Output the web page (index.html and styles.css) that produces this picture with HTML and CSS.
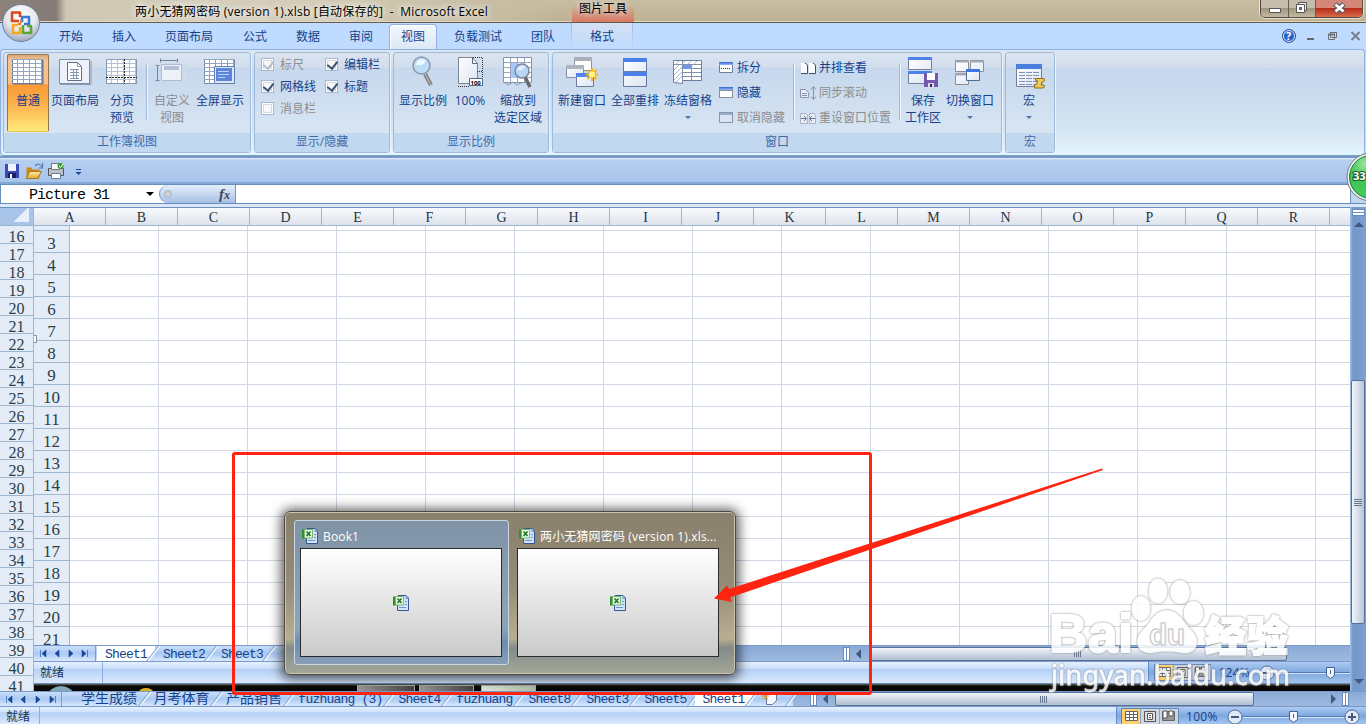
FILE: index.html
```html
<!DOCTYPE html>
<html lang="zh-CN">

<head>
    <meta charset="UTF-8">
    <title>Microsoft Excel</title>
    <link rel="stylesheet" href="styles.css">
</head>

<body>
    <svg class="defs">
        <defs>
            <linearGradient id="gBlue" x1="0" y1="0" x2="0" y2="1"><stop offset="0" stop-color="#2f62cf"/><stop offset="1" stop-color="#9dbdf8"/></linearGradient>
            <linearGradient id="gPage" x1="0" y1="0" x2="1" y2="1"><stop offset="0" stop-color="#fff"/><stop offset="1" stop-color="#dce4f2"/></linearGradient>
            <radialGradient id="gOrb" cx=".5" cy=".3" r=".7"><stop offset="0" stop-color="#fff"/><stop offset=".6" stop-color="#e3e6ec"/><stop offset="1" stop-color="#9aa6ba"/></radialGradient>
            <radialGradient id="gGreen" cx=".35" cy=".2" r=".9"><stop offset="0" stop-color="#9be69b"/><stop offset=".4" stop-color="#3fc254"/><stop offset="1" stop-color="#44cf5f"/></radialGradient>
            <linearGradient id="gFold" x1="0" y1="0" x2="0" y2="1"><stop offset="0" stop-color="#fff0a0"/><stop offset="1" stop-color="#e0a52c"/></linearGradient>
            <pattern id="cells" width="6" height="4" patternUnits="userSpaceOnUse"><path d="M5.5 0v4M0 3.5h6" stroke="#94a5c0" fill="none"/></pattern>
        </defs>
        <symbol id="xls" viewBox="0 0 16 16">
            <path d="M5 .5h8l2.500 2.500v12.500H4.500V8z" fill="#d3e3fa" stroke="#34578f"/>
            <path d="M13 .5v3h2.500M6 12.500h7M12 9.500h2M12 6.500h2" stroke="#6b93cf" fill="none"/>
            <path d="M0 1.500h4v9H0z" fill="#2c9231"/>
            <path d="M2.500 1.500h8v8.500h-8z" fill="#e9f7df" stroke="#74b96e"/>
            <path d="M4.500 3.500l4 4.500M8.500 3.500l-4 4.500" stroke="#24732b" stroke-width="1.600"/>
        </symbol>
        <symbol id="wpane" viewBox="0 0 16 16">
            <path d="M1.500 2.500h13v10h-13z" fill="#fff" stroke="#6b7f9f"/>
            <path d="M1 2h14v3H1z" fill="url(#gBlue)"/>
        </symbol>
        <symbol id="views" viewBox="0 0 58 17">
            <path d="M.5.5h57v16H.5z" fill="#cdd6e2" stroke="#6485b3"/>
            <path d="M1 1h18v15H1z" fill="#ffd06c"/>
            <path d="M4.500 3.500h12v9h-12zM4.500 6.500h12M4.500 9.500h12M8.500 3.500v9M12.500 3.500v9" fill="#fff" stroke="#666"/>
            <path d="M23.500 3.500h11v10h-11z" fill="#ddd" stroke="#555"/><path d="M26.500 5.500h5v6h-5zM28 7.500h2M28 9.500h2" fill="#fff" stroke="#555"/>
            <path d="M41.500 3.500h12v9h-12z" fill="#999" stroke="#666"/><path d="M42 3h4v7h-4zM48 3h4v5h-4z" fill="#fff" stroke="#555"/>
            <path d="M19.500 1v15M38.500 1v15" stroke="#8ea4c4"/>
        </symbol>
    </svg>

    <header class="titlebar">
        <div class="title">两小无猜网密码 (version 1).xlsb [自动保存的] &nbsp;-&nbsp; Microsoft Excel</div>
        <div class="context-title">图片工具</div>
        <div class="winbtns">
            <span><svg width="27" height="17"><path d="M8.500 8.500h11v4h-11z" fill="#fff" stroke="#555"/></svg></span>
            <span><svg width="26" height="17"><path d="M9.500 2.500h8v8h-8z" fill="#eee" stroke="#555"/><path d="M7.500 4.500h8v8h-8z" fill="#fff" stroke="#555"/><path d="M10.500 7.500h2v2h-2z" fill="#888" stroke="#555"/></svg></span>
            <span class="close"><svg width="46" height="17"><path d="M19 4l9 8M28 4l-9 8" stroke="#555566" stroke-width="5"/><path d="M19.500 4.500l8 7M27.500 4.500l-8 7" stroke="#fff" stroke-width="2.800"/></svg></span>
        </div>
    </header>

    <nav class="tabs">
        <span class="tab">开始</span>
        <span class="tab">插入</span>
        <span class="tab wide">页面布局</span>
        <span class="tab">公式</span>
        <span class="tab">数据</span>
        <span class="tab">审阅</span>
        <span class="tab active">视图</span>
        <span class="tab load">负载测试</span>
        <span class="tab team">团队</span>
        <span class="tab format">格式</span>
        <svg class="tab-tools" width="84" height="16">
            <circle cx="11" cy="8" r="6.500" fill="#2460cf" stroke="#33507f"/><circle cx="11" cy="8" r="5.500" fill="none" stroke="#dfeaff"/>
            <text x="8" y="12" font-size="11" font-weight="bold" fill="#fff">?</text>
            <path d="M29 11h7" stroke="#666" stroke-width="2"/>
            <path d="M52.500 4.500h6v5h-6zM50.500 6.500h6v5h-6zM52 4.500h7" fill="none" stroke="#6b7078"/><path d="M50 6.500h7" stroke="#6b7078" stroke-width="2"/>
            <path d="M73.500 4l8 8M81.500 4l-8 8" stroke="#777f8c" stroke-width="2"/>
        </svg>
    </nav>

    <section class="ribbon">
        <div class="group g-views">
            <div class="tools">
                <div class="btn pressed">
                    <svg class="ico" viewBox="0 0 32 32"><path d="M1 4h31v25H1z" fill="#6a5b48" opacity=".4"/><path d="M.5 3.500h30v24H.5z" fill="#fff" stroke="#667a99"/><path d="M0 3h30v24H0z" fill="url(#cells)"/></svg>
                    <p>普通</p>
                </div>
                <div class="btn w52">
                    <svg class="ico" viewBox="0 0 32 32"><path d="M1 28.500h31V5" fill="none" stroke="#8c99ae"/><path d="M.5 3.500h30v24H.5z" fill="#eef2f8" stroke="#7b8eac"/><path d="M8.500 6.500h10l4 4v14h-14z" fill="#fff" stroke="#5c6f8f"/><path d="M18.500 6.500v4h4M11 13.500h9M11 16.500h9M11 19.500h9M11 22.500h9M14.500 13v10M17.500 13v10" fill="none" stroke="#8797b2"/></svg>
                    <p>页面布局</p>
                </div>
                <div class="btn w42">
                    <svg class="ico" viewBox="0 0 32 32"><path d="M.5 3.500h30v24H.5z" fill="#fff" stroke="#8294af"/><path d="M0 3h30v24H0z" fill="url(#cells)" opacity=".7"/><path d="M18.500 3v25M0 21.500h31" stroke="#222" stroke-dasharray="2 1"/></svg>
                    <p>分页<br>预览</p>
                </div>
                <i class="sep"></i>
                <div class="btn w44 off">
                    <svg class="ico" viewBox="0 0 32 32"><path d="M9 7h21v20H9z" fill="#d0dbea"/><path d="M5.500 8.500h20v16h-20z" fill="#edf2f9" stroke="#aebcd2"/><path d="M8 10h15v4H8z" fill="#b1bfd8"/><path d="M4.500 4.500h17M4.500 2.500v4M21.500 2.500v4M1.500 9v16M-.5 9.500h4M-.5 24.500h4" stroke="#7886a2" fill="none"/></svg>
                    <p>自定义<br>视图</p>
                </div>
                <div class="btn w52">
                    <svg class="ico" viewBox="0 0 32 32"><path d="M.5 3.500h30v24H.5z" fill="#fff" stroke="#7286a6"/><path d="M0 3h30v24H0z" fill="url(#cells)"/><path d="M10.500 10.500h20v17h-20z" fill="#dce7fa" stroke="#6480b0"/><path d="M12 12h16v13H12z" fill="#5b85dc"/><path d="M14 15.500h11M14 18.500h11M14 21.500h7" stroke="#bed5ff"/></svg>
                    <p>全屏显示</p>
                </div>
            </div>
            <h3>工作簿视图</h3>
        </div>

        <div class="group g-show">
            <div class="tools checks">
                <label class="off"><i class="box on"></i>标尺</label>
                <label><i class="box on"></i>编辑栏</label>
                <label><i class="box on"></i>网格线</label>
                <label><i class="box on"></i>标题</label>
                <label class="off"><i class="box"></i>消息栏</label>
            </div>
            <h3>显示/隐藏</h3>
        </div>

        <div class="group g-zoom">
            <div class="tools">
                <div class="btn w54">
                    <svg class="ico" viewBox="0 0 32 32"><path d="M18 18l6 11" stroke="#777" stroke-width="4"/><path d="M18 18l6 11" stroke="#bbb" stroke-width="1.500"/><circle cx="14.500" cy="9.500" r="8.500" fill="#bcdcf8" stroke="#8c99ad" stroke-width="1.600"/><path d="M9 9a6 6 0 0 1 9-5q1 6-9 5" fill="#edf8ff"/></svg>
                    <p>显示比例</p>
                </div>
                <div class="btn w40">
                    <svg class="ico" viewBox="0 0 32 32"><path d="M4.500 1.500h14l5 6v20h-19z" fill="url(#gPage)" stroke="#7d8797"/><path d="M18.500 1.500v6h5" fill="none" stroke="#596579"/><path d="M19 1.500h9.500V21M4 30.500h11M23 15.500h6" fill="none" stroke="#333" stroke-dasharray="1 1"/><path d="M15.500 22.500h13v7h-13z" fill="#fff" stroke="#59677c"/><text x="16.500" y="28.500" font-size="6" font-weight="bold">100</text></svg>
                    <p>100%</p>
                </div>
                <div class="btn w56">
                    <svg class="ico" viewBox="0 0 32 32"><path d="M1.500 1.500h28v25h-28z" fill="#fff" stroke="#8795ac"/><path d="M2 6.500h27M2 11.500h27M2 16.500h27M2 21.500h27M8.500 2v24M15.500 2v24M22.500 2v24" stroke="#9aa7be"/><path d="M9 7h6v15H9z" fill="#a9c6fb"/><path d="M2 26l4 3 5-3 4 3 6-3" fill="none" stroke="#8795ac"/><path d="M23 21l5 10" stroke="#686868" stroke-width="3.500"/><circle cx="20" cy="15" r="7" fill="#bad5f5" stroke="#7c8799" stroke-width="1.500"/><path d="M15 14q2-5 8-4-1 5-8 4" fill="#e3f2ff"/></svg>
                    <p>缩放到<br>选定区域</p>
                </div>
            </div>
            <h3>显示比例</h3>
        </div>

        <div class="group g-window">
            <div class="tools">
                <div class="btn w54">
                    <svg class="ico" viewBox="0 0 32 32"><path d="M8.500 1.500h17v13h-17z" fill="#fff" stroke="#8a8f99"/><path d="M8 1h18v4H8z" fill="#a9afbb"/><path d="M.5 9.500h17v12H.5z" fill="url(#gPage)" stroke="#8a8f99"/><path d="M0 9h18v4H0z" fill="#b0b5c0"/><path d="M10.500 17.500h17v13h-17z" fill="url(#gPage)" stroke="#6a7da0"/><path d="M10 17h18v4H10z" fill="#5285ee"/><path d="M26 12v13M20 18.500h12M21.500 14l9 9M30.500 14l-9 9" stroke="#f5b410" stroke-width="2"/><circle cx="26" cy="18.500" r="3" fill="#fff58d"/></svg>
                    <p>新建窗口</p>
                </div>
                <div class="btn w52">
                    <svg class="ico" viewBox="0 0 32 32"><path d="M4.500 2.500h23v28h-23z" fill="url(#gPage)" stroke="#67799a"/><path d="M4 2h24v4H4zM4 16h24v4H4z" fill="#4b80e9"/><path d="M4 15.500h24" stroke="#667fa9"/></svg>
                    <p>全部重排</p>
                </div>
                <div class="btn w54">
                    <svg class="ico" viewBox="0 0 32 32"><path d="M1.500 4.500h28v20h-19v3l-9-1z" fill="#fff" stroke="#6b7e9e"/><path d="M2 8.500h27M10 12.500h19M10 16.500h19M10 20.500h19M10.500 5v21M19.500 9v16" stroke="#8291ab"/><path d="M11 9h9v4h-9z" fill="#6f97ee"/><path d="M3 9l4-4M9 9l4-4M15 9l4-4M21 9l4-4M2 14l5-5M2 19l8-8M2 24l8-8M4 26l6-6" stroke="#93a5c4" stroke-width=".8"/></svg>
                    <p>冻结窗格</p><b class="arr"></b>
                </div>
                <div class="smalls s1">
                    <div><svg width="16" height="16"><use href="#wpane"/><path d="M3 8.500h10" stroke="#333" stroke-dasharray="1 1"/></svg>拆分</div>
                    <div><svg width="16" height="16"><path d="M1.500 5.500h13v7h-13z" fill="#fff" stroke="#333" stroke-dasharray="1 1"/><path d="M1 2h14v3H1z" fill="url(#gBlue)"/></svg>隐藏</div>
                    <div class="off"><svg width="16" height="16"><path d="M1.500 2.500h13v10h-13z" fill="#dae4f2" stroke="#8794aa"/><path d="M2 4h12" stroke="#9cadc9" stroke-width="2"/></svg>取消隐藏</div>
                </div>
                <i class="sep"></i>
                <div class="smalls s2">
                    <div><svg width="16" height="16"><path d="M1 3h4l2 2v8H1zM9 3h4l2 2v8H9z" fill="#fff"/><path d="M1 13.500h6.500V5L5 3M9 13.500h6.500V5L13 3" fill="none" stroke="#3d506e"/></svg>并排查看</div>
                    <div class="off"><svg width="16" height="16"><path d="M.5 4.500h5l3 3v5h-8zM2 8.500h5M2 10.500h5" fill="#e8edf5" stroke="#8794ab"/><path d="M13.500 2v12M11 4.500l2.500-3 2.500 3M11 11.500l2.500 3 2.500-3" fill="none" stroke="#8292ad"/></svg>同步滚动</div>
                    <div class="off"><svg width="16" height="16"><path d="M.5 3.500h6l1 2v8h-7zM9.500 3.500h5l1 2v8h-6z" fill="#e8edf5" stroke="#a9b5c8"/><path d="M1 8.500h5M4 6l2.500 2.500L4 11M15 8.500h-5M12 6L9.500 8.500 12 11" fill="none" stroke="#64789c"/></svg>重设窗口位置</div>
                </div>
                <i class="sep"></i>
                <div class="btn w40">
                    <svg class="ico" viewBox="0 0 32 32"><path d="M1.500 1.500h23v12h-23zM1.500 15.500h23v12h-23z" fill="url(#gPage)" stroke="#70809d"/><path d="M1 1h24v3H1zM1 15h24v3H1z" fill="#4f82e6"/><path d="M17 17h14v14H17z" fill="#7657ae"/><path d="M20 17h8v7h-8z" fill="#fff"/><path d="M21 27h6v4h-6z" fill="#ddd5ed"/><path d="M23 28h2v3h-2z" fill="#352750"/></svg>
                    <p>保存<br>工作区</p>
                </div>
                <div class="btn w54">
                    <svg class="ico" viewBox="0 0 32 32"><path d="M1.500 4.500h13v11h-13zM16.500 4.500h13v11h-13zM1.500 17.500h13v11h-13z" fill="url(#gPage)" stroke="#898d94"/><path d="M1 5.500h14M16 5.500h14M1 18.500h14" stroke="#a5a9b2" stroke-width="2"/><path d="M12.500 13.500h13v11h-13z" fill="url(#gPage)" stroke="#536a92"/><path d="M12 14.500h14" stroke="#3d76e2" stroke-width="3"/></svg>
                    <p>切换窗口</p><b class="arr"></b>
                </div>
            </div>
            <h3>窗口</h3>
        </div>

        <div class="group g-macro">
            <div class="tools">
                <div class="btn w42">
                    <svg class="ico" viewBox="0 0 32 32"><path d="M3.500 8.500h25v22h-25z" fill="url(#gPage)" stroke="#7180a1"/><path d="M3 8h26v5H3z" fill="#4c7ee0"/><path d="M6 16.500h20M6 19.500h20M6 22.500h20M6 25.500h20M6 28.500h20" stroke="#7c93bc" stroke-dasharray="6 1"/><path d="M22.500 22.500h8.500q1.500 3.500-2 3.500l-1 3h3q1 3-1 3h-8.500q-1-3.500 2-3.500l1-3.500q-3 0-2-2.500" fill="#f0ca58" stroke="#8f6d1c"/></svg>
                    <p>宏</p><b class="arr"></b>
                </div>
            </div>
            <h3>宏</h3>
        </div>
    </section>

    <div class="qat">
        <svg width="84" height="18">
            <path d="M1 2h14v14H1z" fill="#3c49b5"/><path d="M4 2h8v7H4z" fill="#eef3ff"/><path d="M4 11h8v5H4z" fill="#172065"/><path d="M6 12h2v4H6z" fill="#fff"/>
            <g transform="translate(-3)"><path d="M25.500 5.500h5l1 2h7v9h-13z" fill="#c98a19"/><path d="M28.500 9.500h12l-4 7h-11z" fill="url(#gFold)" stroke="#a77521"/><path d="M34 4q4-4 7 1M41.500 1v5h-4" fill="none" stroke="#527db0" stroke-width="1.200"/></g>
            <g transform="translate(-3)"><path d="M47.500 6.500h15v7h-15z" fill="#bfc1c6" stroke="#555"/><path d="M50.500 1.500h8v6h-8z" fill="#f5f8ff" stroke="#777"/><path d="M50.500 11.500h9v5h-9z" fill="#fff" stroke="#6a80a1"/><circle cx="59.500" cy="4" r="3" fill="#3f9a3e"/><path d="M58 4l1.500 1.500L62 2" stroke="#fff" fill="none"/></g>
            <path d="M72 7.500h5" stroke="#1c4796"/><path d="M71.500 10h6l-3 3z" fill="#1c4796"/>
        </svg>
    </div>

    <div class="formula">
        <div class="namebox"><span>Picture 31</span><b class="arr"></b></div>
        <div class="fx"><i class="knob"></i><em>f<small>x</small></em></div>
        <div class="entry"></div>
        <div class="expand"></div>
    </div>
    <div class="band"></div>

    <main class="work">
        <div class="sheet">
            <div class="cols" id="cols"><span class="corner"></span></div>
            <div class="panes">
                <div class="outer-rows" id="outerRows"></div>
                <div class="inner">
                    <div class="cells">
                        <div class="inner-rows" id="innerRows"><span class="cut"></span></div>
                        <div class="lines"></div>
                        <i class="handle"></i>
                    </div>
                    <div class="sheetbar bar-in">
                        <svg class="nav" width="62" height="15"><path d="M6.500 4v7M12 4v7L8 7.500zM25 4v7l-4-3.500zM35 4v7l4-3.500zM48 4v7l4-3.500zM53.500 4v7" fill="#174699" stroke="#174699" stroke-width=".6"/></svg>
                        <span class="st on">Sheet1</span><span class="st">Sheet2</span><span class="st">Sheet3</span><span class="st new"></span>
                        <div class="hscroll"><i class="split"></i><i class="la"></i><i class="thumb"></i></div>
                    </div>
                    <div class="status st-in">
                        <span class="ready">就绪</span>
                        <div class="zoomer">
                            <svg width="58" height="17"><use href="#views"/></svg>
                            <span>124%</span>
                            <svg class="slide" width="94" height="17"><path d="M18 8.500h76" stroke="#5479b4"/><path d="M18 9.500h76" stroke="#d5e5ff"/><circle cx="10" cy="9" r="7" fill="#dfe9f8" stroke="#536c96"/><path d="M6 9h8" stroke="#44597c" stroke-width="2"/><path d="M69.500 3.500h8v8l-4 3-4-3z" fill="#f3f7ff" stroke="#466190"/><path d="M73.500 6v4" stroke="#466190"/></svg>
                        </div>
                    </div>
                    <div class="taskbar"><i class="orb"></i><i class="gold"></i><i class="tb t1"></i><i class="tb t2"></i><i class="tb t3"></i></div>
                </div>
            </div>
        </div>
        <div class="vscroll"><i class="vsplit"></i><b class="up"></b><i class="vthumb"></i><b class="down"></b></div>
    </main>

    <div class="sheetbar bar-out">
        <svg class="nav" width="62" height="14"><path d="M6.500 4v7M12 4v7L8 7.500zM25 4v7l-4-3.500zM36 4v7l4-3.500zM50 4v7l4-3.500zM55.500 4v7" fill="#174699" stroke="#174699" stroke-width=".6"/></svg>
        <span class="st cn">学生成绩</span><span class="st cn">月考体育</span><span class="st cn">产品销售</span><span class="st">fuzhuang (3)</span><span class="st">Sheet4</span><span class="st">fuzhuang</span><span class="st">Sheet8</span><span class="st">Sheet3</span><span class="st">Sheet5</span><span class="st on">Sheet1</span><span class="st new"><svg width="18" height="14"><path d="M5.500 2.500h10v6l-4 4h-6z" fill="#f5f8ff" stroke="#68799b"/><path d="M4 0v8M0 4h8M1 1l6 6M7 1L1 7" stroke="#e79b22"/></svg></span>
        <div class="hscroll"><i class="split"></i><i class="la"></i><i class="thumb"></i><i class="ra"></i><i class="split end"></i></div>
    </div>
    <div class="status st-out">
        <span class="ready">就绪</span>
        <div class="zoomer">
            <svg width="58" height="17"><use href="#views"/></svg>
            <span>100%</span>
            <svg class="slide" width="140" height="17"><path d="M18 8.500h102" stroke="#5479b4"/><path d="M18 9.500h102" stroke="#d5e5ff"/><circle cx="10" cy="9" r="7" fill="#dfe9f8" stroke="#536c96"/><path d="M6 9h8" stroke="#44597c" stroke-width="2"/><path d="M64.500 3.500h8v8l-4 3-4-3z" fill="#f3f7ff" stroke="#466190"/><path d="M68.500 6v4" stroke="#466190"/><circle cx="127" cy="9" r="7" fill="#dfe9f8" stroke="#536c96"/><path d="M123 9h8M127 5v8" stroke="#44597c" stroke-width="2"/></svg>
        </div>
    </div>

    <!-- office button -->
    <svg class="office" width="42" height="42">
        <circle cx="21" cy="21" r="18.500" fill="url(#gOrb)" stroke="#75829a"/>
        <g fill="none" stroke-width="2.600" stroke-linejoin="round">
            <path d="M20 15v-4.500h-8V19h7" stroke="#d9471c"/><path d="M22 20v-5h7v7h-5" stroke="#3f78cf"/>
            <path d="M18 23h-5v8h7v-6" stroke="#f3a81f"/><path d="M23 23v8h8v-7h-4" stroke="#5ba53a"/>
        </g>
        <path d="M20 18h2v3h-2zM18 21h3v2h-3z" fill="#e9742c"/>
    </svg>

    <!-- alt-tab style window picker -->
    <div class="picker">
        <div class="win sel">
            <div class="cap"><svg width="16" height="16"><use href="#xls"/></svg>Book1</div>
            <div class="shot"><svg width="16" height="16"><use href="#xls"/></svg></div>
        </div>
        <div class="win">
            <div class="cap"><svg width="16" height="16"><use href="#xls"/></svg>两小无猜网密码 (version 1).xls...</div>
            <div class="shot"><svg width="16" height="16"><use href="#xls"/></svg></div>
        </div>
    </div>

    <svg class="mark" width="260" height="130" viewBox="1040 570 260 130">
        <g class="logo">
            <text x="1049" y="652" font-size="53" font-weight="bold" textLength="84">Bai</text>
            <ellipse cx="1141" cy="608.500" rx="8.500" ry="11.500"/><ellipse cx="1158" cy="591" rx="8.500" ry="11.500"/><ellipse cx="1180" cy="592" rx="9" ry="11"/><ellipse cx="1193.500" cy="613" rx="9" ry="11"/>
            <path d="M1167 611c8 0 13 6 17 12 5 7 12 11 12 19 0 8-6 11-14 10-10-2-20-2-30 0-8 1-14-3-14-11 0-8 8-11 12-18 4-7 9-12 17-12z"/>
            <text class="han" x="1205" y="651" font-size="41" font-weight="900" textLength="83">经验</text>
        </g>
        <text class="du" x="1149" y="645" font-size="30" font-weight="bold" textLength="36">du</text>
        <text class="url" x="1051" y="685" font-size="27" textLength="239">jingyan.baidu.com</text>
    </svg>

    <svg class="badge" width="24" height="54">
        <circle cx="26" cy="27" r="24" fill="#f3f3f3" stroke="#777"/><circle cx="26" cy="27" r="21.500" fill="url(#gGreen)" stroke="#197a35"/>
        <text x="8" y="30" font-size="11" font-weight="bold">33</text>
    </svg>

    <div class="redbox"></div>
    <svg class="redarrow" width="400" height="140" viewBox="710 465 400 140">
        <path d="M714 598.500L727 585.500 729 589 1102 468.500 1103 470 730 597.500 732 602z" fill="#ff2412"/>
    </svg>

    <script>
        function add(id, text) {
            const span = document.createElement('span');
            span.textContent = text;
            document.getElementById(id).appendChild(span);
        }
        'ABCDEFGHIJKLMNOPQR'.split('').forEach(c => add('cols', c));
        for (let i = 16; i <= 41; i++) add('outerRows', i);
        for (let i = 3; i <= 21; i++) add('innerRows', i);
    </script>
</body>

</html>
```
FILE: styles.css
```css
* {
    box-sizing: border-box;
}

body {
    margin: 0;
    width: 1366px;
    height: 724px;
    overflow: hidden;
    position: relative;
    font: 12px "Open Sans", "Noto Sans CJK SC", sans-serif;
    color: #15428b;
    background: #bfdbff;
    display: flex;
    flex-direction: column;
}

body > * {
    flex-shrink: 0;
}

svg {
    display: block;
}

.defs {
    position: absolute;
    width: 0;
    height: 0;
}

p,
h3 {
    margin: 0;
    font-weight: normal;
}

.titlebar {
    height: 23px;
    display: flex;
    align-items: flex-start;
    color: #000;
    background: linear-gradient(90deg, #8c827b 0, #857b76 56px, #d0c8b5 66px, #d6cebb 260px, #c9bea4 480px, rgba(196, 183, 155, 0) 560px), linear-gradient(#c8bda3, #bfb292);
    border-bottom: 1px solid #615a49;
    box-shadow: inset 0 -1px #ded7c5;
}

.title {
    width: 437px;
    margin-left: 135px;
    line-height: 23px;
    letter-spacing: 0.200px;
    white-space: pre;
    text-shadow: 0 0 6px #fff, 0 0 8px #fff;
}

.context-title {
    width: 62px;
    height: 22px;
    line-height: 17px;
    text-align: center;
    text-shadow: 0 0 6px #fff;
    background: linear-gradient(rgba(220, 120, 100, 0) 20%, #dd7766);
}

.winbtns {
    display: flex;
    height: 18px;
    margin: 0 3px 0 auto;
    border: 1px solid #564c45;
    border-top: 0;
    border-radius: 0 0 5px 5px;
    overflow: hidden;
    box-shadow: 0 0 0 1px #e6dfd1;
}

.winbtns span {
    background: linear-gradient(#c5bdac 45%, #a0957f 50%, #c3b9a3);
    border-right: 1px solid #665d50;
}

.winbtns .close {
    border: 0;
    background: linear-gradient(#d5877a 45%, #b92d1b 50%, #d86c47);
}

.tabs {
    height: 26px;
    display: flex;
    padding-left: 39px;
    line-height: 27px;
}

.tab {
    width: 53px;
    text-align: center;
    padding-left: 11px;
}

.tab.wide {
    width: 77px;
    margin-right: 1px;
}

.tab.active {
    margin-left: 7px;
    padding: 0;
    width: 48px;
    margin-top: 1px;
    line-height: 24px;
    background: linear-gradient(#f2f7ff, #dde7f4);
    border: 1px solid #8db2e3;
    border-bottom: 0;
    border-radius: 4px 4px 0 0;
    box-shadow: inset 1px 1px #fff;
    position: relative;
    z-index: 1;
}

.tab.load {
    width: 82px;
    padding: 0;
}

.tab.team {
    width: 48px;
    padding: 0;
}

.tab.format {
    width: 62px;
    padding: 0;
    margin-left: 4px;
    background: linear-gradient(#d4e0f2, #bfdbff);
    border: solid transparent;
    border-width: 0 1px;
    border-image: linear-gradient(#a8b9d0, #bfdbff) 1;
}

.tab-tools {
    margin: 5px 4px 0 auto;
}

.ribbon {
    height: 107px;
    padding: 2px 0 0 2px;
    margin-right: 1px;
    display: flex;
    gap: 3px;
    border: 1px solid #8db2e3;
    border-bottom-color: #73a6b9;
    border-radius: 4px;
    background: linear-gradient(#dce6f3 0, #d2deed 17px, #c7d8ed 18px, #c9d9ee 34px, #d5e4f2 80px, #e3f4fd 104px);
}

.group {
    height: 101px;
    border: 1px solid #9fbbdc;
    border-radius: 3px;
    box-shadow: 1px 1px #eaf3fd;
    background: linear-gradient(#dae4f1 0, #d2deed 14px, #c7d8ed 15px, #d7e5f3 80px);
    display: flex;
    flex-direction: column;
}

.g-views { width: 248px; }
.g-show { width: 136px; }
.g-zoom { width: 156px; }
.g-window { width: 450px; }
.g-macro { width: 50px; }

.group h3 {
    height: 19px;
    line-height: 18px;
    font-size: 12px;
    text-align: center;
    color: #3e6aaa;
    background: #c1d8f0;
}

.tools {
    height: 80px;
    padding: 1px 2px 0;
    display: flex;
}

.g-views .tools {
    padding-left: 3px;
}

.btn {
    text-align: center;
    line-height: 17px;
    white-space: nowrap;
    padding-top: 2px;
}

.btn p {
    margin: 4px -4px 0;
}

.ico {
    width: 32px;
    height: 32px;
    margin: 0 auto;
    overflow: visible;
}

.pressed {
    width: 42px;
    height: 78px;
    border: 1px solid #8f7652;
    border-bottom-color: #edc64d;
    padding-top: 1px;
    border-radius: 2px;
    background: linear-gradient(#d8a87b 0, #f9c494 6px, #fcbd81 29px, #fb9a36 30px, #fdb04a 48px, #ffe97d);
}

.w40 { width: 40px; }
.w42 { width: 42px; }
.w44 { width: 44px; }
.w52 { width: 52px; }
.w54 { width: 54px; }
.w56 { width: 56px; }

.off {
    color: #8d8d8d;
}

.sep {
    width: 2px;
    height: 56px;
    margin: 10px 2px 0 3px;
    background: linear-gradient(90deg, #9fb8d8 50%, #f0f7ff 50%);
}

.arr {
    display: block;
    width: 0;
    margin: 7px auto 0;
    border: 3px solid transparent;
    border-top-color: #4c76b3;
    border-bottom: 0;
}

.checks {
    display: grid;
    grid-template-columns: 64px 64px;
    grid-auto-rows: 22px;
    padding: 0 0 0 6px;
}

.checks label {
    display: flex;
    align-items: center;
    white-space: nowrap;
}

.box {
    width: 13px;
    height: 13px;
    margin-right: 6px;
    border: 1px solid #a5b8d2;
    background: #f5f7fa;
    box-shadow: inset 0 0 0 1px #fff, inset 0 0 0 2px #d5dae2;
}

.box.on::before {
    content: "";
    display: block;
    width: 5px;
    height: 8px;
    margin: 0 0 0 3px;
    border: solid #3a5176;
    border-width: 0 2px 2px 0;
    transform: rotate(38deg);
}

.off .box.on::before {
    border-color: #b6bfcc;
}

.smalls {
    padding-top: 1px;
    line-height: 25px;
    white-space: nowrap;
}

.smalls div {
    display: flex;
    align-items: center;
    height: 25px;
    gap: 3px;
}

.s1 {
    width: 75px;
    padding-left: 3px;
}

.s2 {
    width: 99px;
    padding-left: 3px;
}

.qat {
    height: 28px;
    border-top: 2px solid #7798c8;
    border-bottom: 2px solid #83a8d7;
    background: linear-gradient(#eaf3ff 0, #b5cff0 2px, #a8c4eb);
    padding: 4px 0 0 4px;
}

.formula {
    height: 20px;
    display: flex;
    border: 1px solid #668dbb;
    border-width: 1px 0;
    background: #fff;
    color: #000;
}

.namebox {
    width: 159px;
    border-left: 1px solid #668dbb;
    display: flex;
    align-items: center;
    padding: 3px 5px 0 28px;
    font: 15px "Liberation Mono", monospace;
    letter-spacing: -1px;
}

.namebox .arr {
    border-width: 4px;
    border-top-color: #000;
    border-bottom: 0;
    margin: 0 0 3px auto;
}

.fx {
    width: 77px;
    border: 1px solid #7696bf;
    border-width: 0 1px 0 1px;
    border-radius: 9px 0 0 9px;
    background: linear-gradient(#e5effc, #a5c0e4);
    display: flex;
    justify-content: space-between;
    align-items: center;
    padding: 0 5px 0 4px;
}

.knob {
    width: 8px;
    height: 8px;
    border-radius: 50%;
    background: radial-gradient(#ddd, #a0a8b8);
}

.fx em {
    font: italic bold 15px/16px "Liberation Serif", serif;
    color: #45484d;
}

.fx small {
    font-size: 12px;
}

.expand {
    width: 16px;
    margin-left: auto;
    border-left: 1px solid #668dbb;
    background: #bfd5f0;
}

.band {
    height: 3px;
    background: #d9e7f8;
}

.work {
    height: 484px;
    display: flex;
}

.sheet {
    width: 1350px;
}

.cols {
    height: 19px;
    display: flex;
    overflow: hidden;
    background: linear-gradient(#f8fafc, #dde3ed);
    border: 1px solid #6c90bb;
    border-width: 1px 0;
    border-bottom-color: #9eb6ce;
    font: 14px/20px "Liberation Serif", serif;
    color: #26343f;
    text-align: center;
}

.cols span {
    width: 72px;
    flex: none;
    border-right: 1px solid #9eb6ce;
}

.cols .corner {
    width: 34px;
    background: linear-gradient(135deg, #a9c4e9 65%, #e6effa 65%);
    background-size: 29px 14px;
    background-color: #a9c4e9;
    background-repeat: no-repeat;
}

.panes {
    display: flex;
    height: 465px;
    overflow: hidden;
}

.outer-rows,
.inner-rows {
    display: flex;
    flex-direction: column;
    overflow: hidden;
    text-align: center;
    background: #e4ecf7;
    color: #2b3e46;
}

.outer-rows {
    width: 34px;
    font: 16px/21px "Liberation Serif", serif;
}

.outer-rows span {
    height: 18px;
    flex: none;
    border: solid #9eb6ce;
    border-width: 0 1px 1px 0;
}

.inner-rows {
    width: 36px;
    font: 17px/25px "Liberation Serif", serif;
}

.inner-rows span {
    height: 22px;
    flex: none;
    border: solid #9eb6ce;
    border-width: 0 1px 1px 0;
}

.inner-rows .cut {
    height: 5px;
}

.inner {
    width: 1316px;
}

.cells {
    height: 419px;
    display: flex;
    position: relative;
}

.lines {
    flex: 1;
    background-color: #fff;
    background-image: linear-gradient(90deg, #d0d7e5 1px, transparent 1px), linear-gradient(#d0d7e5 1px, transparent 1px);
    background-size: 89px 22px;
    background-position: -1px 4px;
}

.handle {
    position: absolute;
    left: 0;
    top: 109px;
    width: 3px;
    height: 8px;
    border: 1px solid #7a98b5;
    border-left: 0;
    background: #fff;
}

.sheetbar {
    display: flex;
    overflow: hidden;
    border-top: 1px solid #7b9ac9;
    background: linear-gradient(#c9def9, #a9c9f4 50%, #d9e9fc);
    font: 13px/17px "Liberation Mono", "Noto Sans CJK SC", monospace;
    letter-spacing: -0.8px;
    white-space: pre;
}

.bar-in {
    height: 17px;
    border-bottom: 1px solid #7b9ac9;
}

.bar-out {
    height: 16px;
    border-bottom: 1px solid #7b9ac9;
    line-height: 15px;
}

.nav {
    flex: none;
    margin-right: 1px;
    border-right: 1px solid #7b9ac9;
}

.st {
    flex: none;
    padding: 0 8px;
    position: relative;
}

.st.on {
    background: linear-gradient(128deg, #fff 88%, #c9def9 88%);
}

.st::after {
    content: "";
    position: absolute;
    right: 0;
    top: -1px;
    height: 17px;
    border-left: 1px solid #7d9dc8;
    border-right: 2px solid #eef5ff;
    transform: skewX(-38deg);
}

.st.cn {
    font-size: 14px;
    letter-spacing: 0;
    padding-right: 8.500px;
}

.bar-out .st:nth-of-type(1) {
    margin-left: 10px;
}

.st.new {
    width: 40px;
}

.hscroll {
    flex: 1;
    display: flex;
    align-items: center;
    background: linear-gradient(#8aabd7, #9db9de);
}

.hscroll i {
    flex: none;
}

.split {
    width: 7px;
    height: 14px;
    background: #fff;
    border: 1px solid #668dbb;
    box-shadow: inset 2px 0 #fff, inset 3px 0 #668dbb;
}

.bar-in .split {
    margin-left: 532px;
}

.bar-out .split {
    margin-left: 17px;
}

.la,
.ra {
    border: 5px solid transparent;
    border-right-color: #40597f;
    border-left: 0;
    margin: 0 8px 0 6px;
}

.bar-out .la {
    margin-right: 7px;
}

.thumb {
    height: 14px;
    border: 1px solid #58709a;
    border-radius: 2px;
    background: repeating-linear-gradient(90deg, #68778d 0 1px, transparent 1px 2px) 50% 50% / 8px 7px no-repeat, linear-gradient(#f2f5f9, #ced8e5 50%, #b0bfd2);
}

.bar-in .thumb {
    width: 418px;
}

.bar-out .thumb {
    width: 419px;
}

.ra {
    border-left: 5px solid #40597f;
    border-right: 0;
    margin: 0 0 0 77px;
}

.bar-out .end {
    margin-left: 6px;
}

.status {
    display: flex;
    justify-content: space-between;
    background: linear-gradient(#e4f0ff, #cee1fa 30%, #b4d0f5 34%, #dbeafe);
}

.st-in {
    height: 22px;
    line-height: 21px;
    border-bottom: 1px solid #678bbd;
}

.st-out {
    height: 17px;
    line-height: 19px;
}

.ready {
    width: 69px;
    padding-left: 6px;
    border-right: 1px solid #8dafd9;
    color: #1c3350;
}

.st-out .ready {
    width: 40px;
}

.zoomer {
    display: flex;
    border-left: 1px solid #638ac2;
    background: linear-gradient(#aecbf4, #7ea8de 50%, #a4c4ef);
    padding-left: 5px;
}

.st-in .zoomer {
    width: 202px;
    padding-top: 2px;
}

.st-out .zoomer {
    width: 250px;
    padding-left: 4px;
    padding-top: 1px;
}

.zoomer span {
    width: 46px;
    padding-left: 7px;
    line-height: 17px;
    letter-spacing: 0.300px;
}

.taskbar {
    height: 7px;
    position: relative;
    overflow: hidden;
    background: linear-gradient(#68675b 0, #0c0b07 2px, #060606);
}

.taskbar i {
    position: absolute;
}

.orb {
    left: 14px;
    top: 2px;
    width: 26px;
    height: 20px;
    border-radius: 50%;
    background: #82a8b8;
}

.gold {
    left: 105px;
    top: 4px;
    width: 14px;
    height: 8px;
    border-radius: 50%;
    background: #e0b022;
}

.tb {
    top: 1px;
    height: 8px;
    border: 1px solid #aaa;
    background: linear-gradient(90deg, #999, #444);
}

.t1 { left: 323px; width: 58px; }
.t2 { left: 385px; width: 55px; }
.t3 { left: 447px; width: 55px; background: linear-gradient(90deg, #dfe8d8, #aebda7); }

.vscroll {
    width: 16px;
    position: relative;
    background: linear-gradient(90deg, #9fc0ed, #7397c6 3px, #7da1d1);
}

.vsplit {
    position: absolute;
    left: 2px;
    top: 2px;
    width: 13px;
    height: 7px;
    border: 1px solid #668dbb;
    background: #fff;
    box-shadow: inset 0 2px #fff, inset 0 3px #668dbb;
}

.vthumb {
    position: absolute;
    left: 1px;
    top: 173px;
    width: 14px;
    height: 244px;
    border: 1px solid #58709a;
    border-radius: 2px;
    background: repeating-linear-gradient(#68778d 0 1px, transparent 1px 2px) 50% 50% / 8px 7px no-repeat, linear-gradient(90deg, #f2f5f9, #d8e0ea 45%, #b8c7da);
}

.up,
.down {
    position: absolute;
    left: 4px;
    top: 15px;
    border: 5px solid transparent;
    border-bottom-color: #40597f;
    border-top: 0;
}

.down {
    top: 472px;
    border-top: 5px solid #40597f;
    border-bottom: 0;
}

.office {
    position: absolute;
    left: 0;
    top: 2px;
}

.picker {
    position: absolute;
    left: 284px;
    top: 511px;
    width: 452px;
    height: 164px;
    padding: 8px 9px;
    display: flex;
    gap: 2px;
    border: 1px solid #4e4a42;
    border-radius: 6px;
    background: linear-gradient(#89806d, #958b76 45%, #b9ae91 78%, #838a88 84%, #929890 91%, #a3a799);
    box-shadow: inset 0 0 0 1px #cdc5b3, 0 1px 12px 3px rgba(0, 0, 0, .65);
}

.win {
    width: 215px;
    height: 145px;
    padding: 6px 5px;
    border: 1px solid transparent;
    border-radius: 3px;
}

.win.sel {
    border-color: #c9d7e3;
    background: linear-gradient(#8193a6, #8da4b7 75%, #6e8caf 85%, #879eb7);
}

.cap {
    display: flex;
    gap: 5px;
    height: 21px;
    padding: 1px 2px;
    line-height: 18px;
    color: #fff;
    white-space: nowrap;
    letter-spacing: 0.150px;
}

.shot {
    width: 202px;
    height: 109px;
    display: flex;
    align-items: center;
    justify-content: center;
    border: 1px solid #292b2c;
    background: linear-gradient(#fff, #cacaca);
}

.mark {
    position: absolute;
    left: 1040px;
    top: 570px;
    font-family: "Liberation Sans", "Noto Sans CJK SC", sans-serif;
}

.logo {
    fill: #fff;
    stroke: #fff;
    stroke-width: 2px;
    opacity: .85;
    filter: drop-shadow(0 0 1px #777);
}

.du {
    fill: #fff;
    stroke: #cfd0d3;
    stroke-width: 1.500px;
}

.url {
    font-family: "Noto Sans", sans-serif;
    fill: #fff;
    stroke: #fff;
    stroke-width: .8px;
    opacity: .85;
    filter: drop-shadow(0 0 1px #778);
}

.badge {
    position: absolute;
    left: 1345px;
    top: 150px;
    width: 21px;
}

.badge text {
    fill: #fff;
    stroke: #125f29;
    stroke-width: 2px;
    paint-order: stroke;
}

.redbox {
    position: absolute;
    left: 232px;
    top: 452px;
    width: 640px;
    height: 243px;
    border: 3px solid #ff2412;
    border-radius: 3px;
}

.redarrow {
    position: absolute;
    left: 710px;
    top: 465px;
}
```
